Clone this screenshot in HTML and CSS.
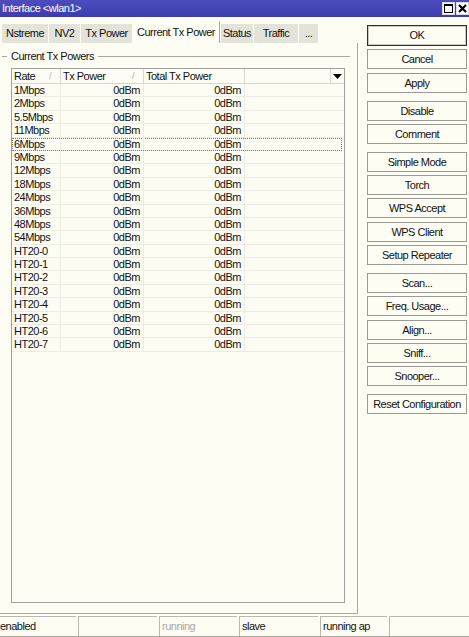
FILE: index.html
```html
<!DOCTYPE html>
<html>
<head>
<meta charset="utf-8">
<title>Interface &lt;wlan1&gt;</title>
<link rel="stylesheet" href="styles.css">
</head>
<body>
<div class="window">
  <div class="titlebar">
    <span class="title">Interface &lt;wlan1&gt;</span>
    <div class="title-btns">
      <span class="tbtn"><svg width="11" height="11" viewBox="0 0 11 11"><rect x="1.5" y="1.5" width="8" height="8" fill="none" stroke="#000" stroke-width="1"/><rect x="1" y="1" width="9" height="2" fill="#000"/></svg></span>
      <span class="tbtn"><svg width="11" height="11" viewBox="0 0 11 11"><path d="M2 2 L9 9 M9 2 L2 9" stroke="#000" stroke-width="2.2"/></svg></span>
    </div>
  </div>

  <div class="body">
    <div class="left">
      <div class="tabs">
        <div class="tab t-nstreme">Nstreme</div>
        <div class="tab t-nv2">NV2</div>
        <div class="tab t-txp">Tx Power</div>
        <div class="tab active t-cur">Current Tx Power</div>
        <div class="tab t-status">Status</div>
        <div class="tab t-traffic">Traffic</div>
        <div class="tab t-more">...</div>
      </div>
      <div class="panel">
        <div class="group-title"><span class="dash"></span><span class="gtext">Current Tx Powers</span><span class="gline"></span></div>
        <div class="grid">
          <div class="row head">
            <div class="c c1">Rate<span class="sort">/</span></div>
            <div class="c c2">Tx Power<span class="sort">/</span></div>
            <div class="c c3">Total Tx Power</div>
            <div class="c c4"></div>
            <div class="c c5"><svg width="9" height="5" viewBox="0 0 9 5"><path d="M0 0 H9 L4.5 5 Z" fill="#000"/></svg></div>
          </div>
          <div class="row"><div class="c c1">1Mbps</div><div class="c c2 num">0dBm</div><div class="c c3 num">0dBm</div></div>
          <div class="row"><div class="c c1">2Mbps</div><div class="c c2 num">0dBm</div><div class="c c3 num">0dBm</div></div>
          <div class="row"><div class="c c1">5.5Mbps</div><div class="c c2 num">0dBm</div><div class="c c3 num">0dBm</div></div>
          <div class="row"><div class="c c1">11Mbps</div><div class="c c2 num">0dBm</div><div class="c c3 num">0dBm</div></div>
          <div class="row focus"><div class="c c1">6Mbps</div><div class="c c2 num">0dBm</div><div class="c c3 num">0dBm</div></div>
          <div class="row"><div class="c c1">9Mbps</div><div class="c c2 num">0dBm</div><div class="c c3 num">0dBm</div></div>
          <div class="row"><div class="c c1">12Mbps</div><div class="c c2 num">0dBm</div><div class="c c3 num">0dBm</div></div>
          <div class="row"><div class="c c1">18Mbps</div><div class="c c2 num">0dBm</div><div class="c c3 num">0dBm</div></div>
          <div class="row"><div class="c c1">24Mbps</div><div class="c c2 num">0dBm</div><div class="c c3 num">0dBm</div></div>
          <div class="row"><div class="c c1">36Mbps</div><div class="c c2 num">0dBm</div><div class="c c3 num">0dBm</div></div>
          <div class="row"><div class="c c1">48Mbps</div><div class="c c2 num">0dBm</div><div class="c c3 num">0dBm</div></div>
          <div class="row"><div class="c c1">54Mbps</div><div class="c c2 num">0dBm</div><div class="c c3 num">0dBm</div></div>
          <div class="row"><div class="c c1">HT20-0</div><div class="c c2 num">0dBm</div><div class="c c3 num">0dBm</div></div>
          <div class="row"><div class="c c1">HT20-1</div><div class="c c2 num">0dBm</div><div class="c c3 num">0dBm</div></div>
          <div class="row"><div class="c c1">HT20-2</div><div class="c c2 num">0dBm</div><div class="c c3 num">0dBm</div></div>
          <div class="row"><div class="c c1">HT20-3</div><div class="c c2 num">0dBm</div><div class="c c3 num">0dBm</div></div>
          <div class="row"><div class="c c1">HT20-4</div><div class="c c2 num">0dBm</div><div class="c c3 num">0dBm</div></div>
          <div class="row"><div class="c c1">HT20-5</div><div class="c c2 num">0dBm</div><div class="c c3 num">0dBm</div></div>
          <div class="row"><div class="c c1">HT20-6</div><div class="c c2 num">0dBm</div><div class="c c3 num">0dBm</div></div>
          <div class="row"><div class="c c1">HT20-7</div><div class="c c2 num">0dBm</div><div class="c c3 num">0dBm</div></div>
        </div>
      </div>
    </div>

    <div class="buttons">
      <div class="bgroup">
        <div class="btn default">OK</div>
        <div class="btn">Cancel</div>
        <div class="btn">Apply</div>
      </div>
      <div class="bgroup">
        <div class="btn">Disable</div>
        <div class="btn">Comment</div>
      </div>
      <div class="bgroup">
        <div class="btn">Simple Mode</div>
        <div class="btn">Torch</div>
        <div class="btn">WPS Accept</div>
        <div class="btn">WPS Client</div>
        <div class="btn">Setup Repeater</div>
      </div>
      <div class="bgroup">
        <div class="btn">Scan...</div>
        <div class="btn">Freq. Usage...</div>
        <div class="btn">Align...</div>
        <div class="btn">Sniff...</div>
        <div class="btn">Snooper...</div>
      </div>
      <div class="bgroup">
        <div class="btn">Reset Configuration</div>
      </div>
    </div>
  </div>

  <div class="statusbar">
    <div class="cell s1">enabled</div>
    <div class="cell s2"></div>
    <div class="cell s3 dim">running</div>
    <div class="cell s4">slave</div>
    <div class="cell s5">running ap</div>
    <div class="cell s6"></div>
  </div>
</div>
</body>
</html>
```

FILE: styles.css
```css
* { box-sizing: border-box; }

html, body {
  margin: 0;
  padding: 0;
  background: #fdfdf3;
}

body {
  font-family: "Liberation Sans", Arial, sans-serif;
  font-size: 11px;
  letter-spacing: -0.5px;
  color: #111;
}

.window {
  width: 469px;
  height: 637px;
  display: flex;
  flex-direction: column;
  background: #fdfdf3;
  overflow: hidden;
}

/* title bar */
.titlebar {
  height: 17px;
  flex: 0 0 17px;
  background: linear-gradient(#4d4dbe, #3c3cb0);
  display: flex;
  align-items: center;
  justify-content: space-between;
  padding: 0 0 0 2px;
}
.title {
  color: #fff;
  font-size: 11px;
  line-height: 17px;
}
.title-btns {
  display: flex;
  gap: 1px;
}
.tbtn {
  width: 13px;
  height: 13px;
  background: #fff;
  border: 1px solid #d8d8e8;
  display: flex;
  align-items: center;
  justify-content: center;
}

/* main area */
.body {
  flex: 1;
  display: flex;
  min-height: 0;
}
.left {
  width: 358px;
  display: flex;
  flex-direction: column;
}

/* tabs */
.tabs {
  height: 26px;
  flex: 0 0 26px;
  display: flex;
  align-items: flex-end;
  padding-left: 2px;
  gap: 1px;
}
.tab {
  height: 19px;
  line-height: 19px;
  background: #e3e3da;
  text-align: center;
  white-space: nowrap;
}
.tab.active {
  height: 22px;
  line-height: 20px;
  background: #fdfdf3;
  border-right: 1px solid #a8a8a0;
  border-top: 1px solid #ffffff;
}
.t-nstreme { width: 46px; }
.t-nv2 { width: 31px; }
.t-txp { width: 51px; }
.t-cur { width: 87px; }
.t-status { width: 32px; }
.t-traffic { width: 44px; }
.t-more { width: 19px; }

/* tab panel */
.panel {
  flex: 1;
  border-right: 1px solid #a8a8a0;
  border-bottom: 1px solid #a8a8a0;
  display: flex;
  flex-direction: column;
  padding: 6px 12px 10px 11px;
}

.group-title {
  display: flex;
  align-items: center;
  height: 14px;
  margin-left: -9px;
  margin-right: -5px;
}
.dash {
  width: 5px;
  border-top: 1px solid #a8a8a0;
}
.gtext {
  padding: 0 4px;
  white-space: nowrap;
}
.gline {
  flex: 1;
  border-top: 1px solid #a8a8a0;
}

/* list */
.grid {
  margin-top: 5px;
  flex: 1;
  border: 1px solid #a0a0a0;
  background: #fdfdf3;
}
.row {
  display: grid;
  grid-template-columns: 49px 83px 101px 86px 13px;
  height: 13.4px;
  line-height: 13px;
  border-bottom: 1px solid #ecece2;
}
.row.head {
  height: 15px;
  line-height: 14px;
  border-bottom: 1px solid #d8d8d0;
}
.c {
  border-right: 1px solid #ecece2;
  padding: 0 2px;
  white-space: nowrap;
  overflow: hidden;
  position: relative;
}
.head .c { border-right-color: #d8d8d0; }
.c.num { text-align: right; padding-right: 3px; }
.c5 {
  border-right: none;
  display: flex;
  align-items: center;
  justify-content: center;
}
.sort {
  position: absolute;
  right: 9px;
  top: 0;
  color: #b0b0b0;
  font-size: 9px;
}
.row.focus {
  outline: 1px dotted #7a7a7a;
  outline-offset: -1px;
  margin-right: 2px;
}

/* buttons column */
.buttons {
  margin-left: 9px;
  width: 100px;
  padding-top: 8px;
  display: flex;
  flex-direction: column;
  gap: 8px;
}
.bgroup {
  display: flex;
  flex-direction: column;
  gap: 3.3px;
}
.btn {
  height: 20px;
  line-height: 18px;
  border: 1px solid #9a9a94;
  background: #fdfdf3;
  text-align: center;
  white-space: nowrap;
}
.btn.default {
  height: 21px;
  border: 1px solid #303030;
  box-shadow: inset 0 0 0 1px #c8c8c0;
}

/* status bar */
.statusbar {
  height: 23px;
  flex: 0 0 23px;
  display: flex;
  padding-top: 2px;
  border-bottom: 1px solid #a8a8a0;
}
.cell {
  height: 20px;
  line-height: 18px;
  border-top: 1px solid #b8b8b0;
  border-left: 1px solid #b8b8b0;
  margin-right: 2px;
  padding-left: 2px;
  white-space: nowrap;
}
.s1 { width: 76px; border-left: none; padding-left: 0; }
.s2 { width: 79px; }
.s3 { width: 78px; }
.s4 { width: 79px; }
.s5 { width: 67px; }
.s6 { flex: 1; margin-right: 0; }
.dim { color: #a8a8a8; }
```
